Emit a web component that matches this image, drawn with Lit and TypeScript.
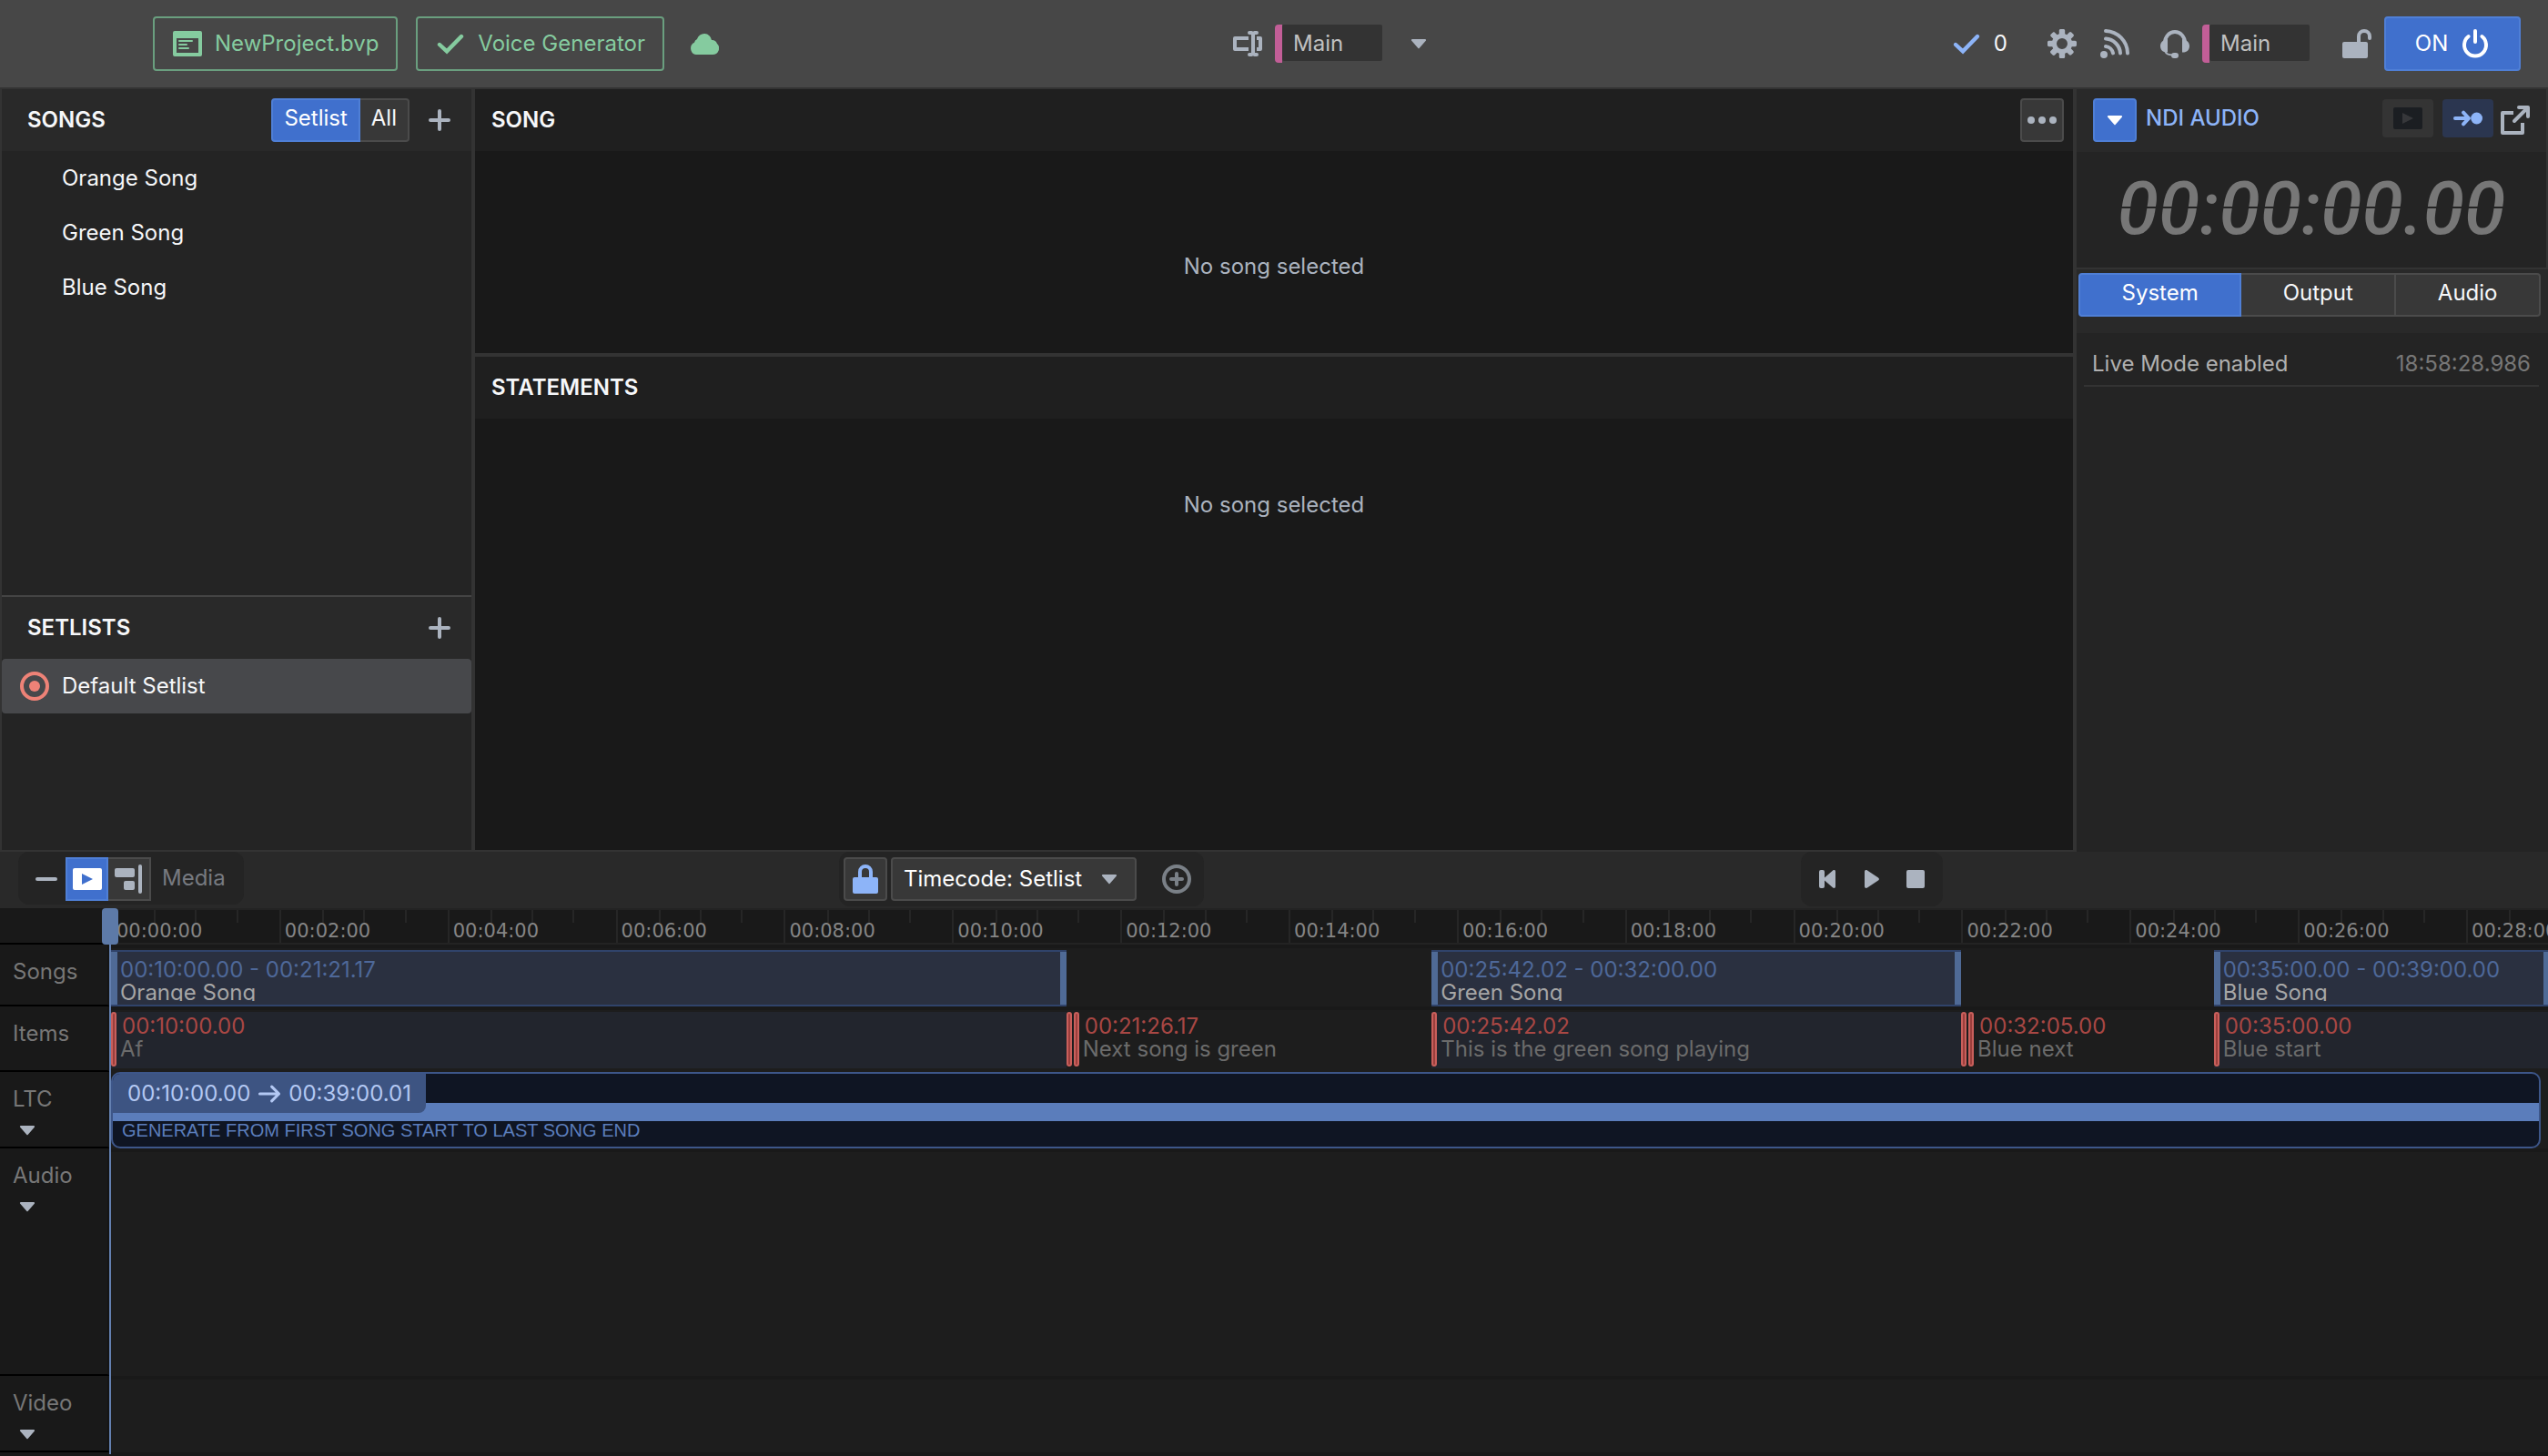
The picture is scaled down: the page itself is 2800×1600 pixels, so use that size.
import { LitElement, html, css, svg, nothing, TemplateResult } from "lit";
import { customElement, state } from "lit/decorators.js";
import { classMap } from "lit/directives/class-map.js";

const glyphs: Record<string, TemplateResult> = {
  app: svg`<path fill-rule="evenodd" d="M1 1h14a1 1 0 0 1 1 1v12a1 1 0 0 1-1 1H1a1 1 0 0 1-1-1V2a1 1 0 0 1 1-1zM2 5v8h12V5z"/><path d="M3.5 6h7a.5.5 0 0 1 0 1h-7a.5.5 0 0 1 0-1zM3.5 8h4a.5.5 0 0 1 0 1h-4a.5.5 0 0 1 0-1zM3.5 10h5a.5.5 0 0 1 0 1h-5a.5.5 0 0 1 0-1z"/>`,
  tick: svg`<path d="M2 8.500l4 3.700L14 4" fill="none" stroke="currentColor" stroke-width="2.200" stroke-linecap="round"/>`,
  cloud: svg`<path d="M12 6a4.100 4.100 0 0 0-8-.5A2.600 2.600 0 0 0 2.500 7.400 3.500 3.500 0 0 0 3.500 14h9a3.500 3.500 0 0 0 2.500-6A3 3 0 0 0 12 6z"/>`,
  textbox: svg`<path d="M8.500 5H1v6h7.500M13 5h2v6h-2" fill="none" stroke="currentColor" stroke-width="2" stroke-linejoin="round"/><path d="M9 2h1.200l.8.700.8-.700H13M9 14h1.200l.8-.700.8.700H13M11 3v10" fill="none" stroke="currentColor" stroke-width="2" stroke-linecap="round" stroke-linejoin="round"/>`,
  caret: svg`<path d="M4.500 5.500h7c.5 0 .700.500.4.900l-3.500 4a.5.5 0 0 1-.8 0l-3.500-4c-.3-.4-.1-.9.4-.9z"/>`,
  cog: svg`<path d="M15.190 6.390h-1.850c-.11-.37-.27-.71-.45-1.040l1.360-1.360c.31-.31.31-.82 0-1.130l-1.130-1.130a.803.803 0 0 0-1.130 0l-1.360 1.360c-.33-.17-.67-.33-1.040-.44V.79c0-.44-.36-.8-.8-.8h-1.600c-.44 0-.8.36-.8.8v1.860c-.39.12-.75.28-1.100.47l-1.300-1.300c-.3-.3-.79-.3-1.090 0L1.820 2.910c-.3.3-.3.79 0 1.090l1.300 1.300c-.2.34-.36.7-.48 1.090H.79c-.44 0-.8.36-.8.8v1.600c0 .44.36.8.8.8h1.850c.11.37.27.71.45 1.040l-1.360 1.360c-.31.31-.31.82 0 1.130l1.130 1.130c.31.31.82.31 1.130 0l1.360-1.360c.33.18.67.33 1.040.44v1.860c0 .44.36.8.8.8h1.600c.44 0 .8-.36.8-.8v-1.860c.39-.12.75-.28 1.100-.47l1.300 1.300c.3.3.79.3 1.090 0l1.090-1.090c.3-.3.3-.79 0-1.090l-1.300-1.300c.19-.35.36-.71.48-1.100h1.850c.44 0 .8-.36.8-.8v-1.600a.816.816 0 0 0-.81-.79zM8 11a3 3 0 1 1 0-6 3 3 0 0 1 0 6z"/>`,
  feed: svg`<circle cx="2" cy="14" r="2"/><path d="M3 9.500A4.500 4.500 0 0 1 7 13.200M3 5.300A8.500 8.500 0 0 1 11 13.200M3 1A12.500 12.500 0 0 1 15 13.200" fill="none" stroke="currentColor" stroke-width="2" stroke-linecap="round"/>`,
  headset: svg`<path d="M2.500 7.500A5.500 6 0 0 1 13.500 7.500" fill="none" stroke="currentColor" stroke-width="2"/><path d="M4 5.500v7.200H3C1.300 12.700 0 11.300 0 9.300 0 7.500 1.200 5.800 4 5.500zM12 5.500v7.200h1c1.700 0 3-1.400 3-3.400 0-1.800-1.200-3.500-4-3.800z"/><path d="M2.800 12.500c.5 1.400 1.700 1.700 4 1.700" fill="none" stroke="currentColor"/><rect x="6" y="13" width="4" height="3" rx="1.500"/>`,
  unlock: svg`<rect x="0" y="7" width="14" height="9" rx="1"/><path d="M9 8V4a3 3 0 0 1 6 0v1" fill="none" stroke="currentColor" stroke-width="2" stroke-linecap="round"/>`,
  lock: svg`<rect x="1" y="7" width="14" height="9" rx="1"/><path d="M5 8V4a3 3 0 0 1 6 0v4" fill="none" stroke="currentColor" stroke-width="2"/>`,
  power: svg`<path d="M4.300 4A6 6 0 1 0 11.700 4M8 1v6" fill="none" stroke="currentColor" stroke-width="2" stroke-linecap="round"/>`,
  plus: svg`<path d="M8 3v10M3 8h10" fill="none" stroke="currentColor" stroke-width="2" stroke-linecap="round"/>`,
  minus: svg`<path d="M3 8h10" fill="none" stroke="currentColor" stroke-width="2" stroke-linecap="round"/>`,
  more: svg`<circle cx="2" cy="8" r="2"/><circle cx="8" cy="8" r="2"/><circle cx="14" cy="8" r="2"/>`,
  video: svg`<path fill-rule="evenodd" d="M1 2h14a1 1 0 0 1 1 1v10a1 1 0 0 1-1 1H1a1 1 0 0 1-1-1V3a1 1 0 0 1 1-1zM5 5v6l6-3z"/>`,
  videoFaint: svg`<rect y="2" width="16" height="12" rx="1" fill="#1b1e22"/><path d="M5 5v6l6-3z" fill="#36373a"/>`,
  toPoint: svg`<circle cx="12.800" cy="8" r="3.200"/><path d="M1 8h6M5.500 4.800L8.500 8l-3 3.200" fill="none" stroke="currentColor" stroke-width="2" stroke-linecap="round" stroke-linejoin="round"/>`,
  share: svg`<path d="M7 4H1v11h11V9.500" fill="none" stroke="currentColor" stroke-width="2" stroke-linejoin="round"/><path d="M7.500 8.500L13.500 2.500M10 1h5v5" fill="none" stroke="currentColor" stroke-width="2" stroke-linecap="round" stroke-linejoin="round"/>`,
  record: svg`<circle cx="8" cy="8" r="7" fill="none" stroke="currentColor" stroke-width="2"/><circle cx="8" cy="8" r="3"/>`,
  alignRight: svg`<rect x="0" y="2" width="11" height="5" rx="1"/><rect x="5" y="9" width="6" height="5" rx="1"/><rect x="13" y="0" width="2" height="16" rx="1"/>`,
  addCircle: svg`<circle cx="8" cy="8" r="7" fill="none" stroke="currentColor" stroke-width="2"/><path d="M8 5v6M5 8h6" fill="none" stroke="currentColor" stroke-width="2" stroke-linecap="round"/>`,
  toStart: svg`<rect x="3" y="3" width="3" height="10" rx="1"/><path d="M12 4v8c0 .9-.7 1.200-1.400.7L6 8.800a1 1 0 0 1 0-1.600l4.600-3.900C11.300 2.800 12 3.100 12 4z"/>`,
  play: svg`<path d="M4 4c0-.9.8-1.200 1.500-.8l6 4c.6.4.6 1.200 0 1.600l-6 4c-.7.4-1.500.1-1.500-.8z"/>`,
  stop: svg`<rect x="3" y="3" width="10" height="10" rx="1"/>`,
  arrow: svg`<path d="M2 8h12M9.500 3.500L14 8l-4.500 4.500" fill="none" stroke="currentColor" stroke-width="1.800" stroke-linecap="round" stroke-linejoin="round"/>`,
};

const icon = (name: string) =>
  html`<svg class="icon" viewBox="0 0 16 16" fill="currentColor" aria-hidden="true">${glyphs[name]}</svg>`;

interface Span {
  from: number;
  to: number;
}
interface SongClip extends Span {
  name: string;
  range: string;
}
interface Cue extends Span {
  name: string;
  time: string;
  kind: "filled" | "plain" | "short";
}

/* Minutes of timecode that fit in the visible part of the timeline. */
const VISIBLE_MINUTES = 28.973;
const percent = (minutes: number) => `${((minutes / VISIBLE_MINUTES) * 100).toFixed(3)}%`;

/* Each block carries the gap to its predecessor as its left margin. */
const place = (blocks: Span[], i: number) => {
  const before = i === 0 ? 0 : blocks[i - 1].to;
  const { from, to } = blocks[i];
  return `margin-left:${percent(from - before)};width:${percent(to - from)}`;
};

const songs = ["Orange Song", "Green Song", "Blue Song"];

const songClips: SongClip[] = [
  { name: "Orange Song", range: "00:10:00.00 - 00:21:21.17", from: 0, to: 11.361 },
  { name: "Green Song", range: "00:25:42.02 - 00:32:00.00", from: 15.701, to: 22 },
  { name: "Blue Song", range: "00:35:00.00 - 00:39:00.00", from: 25, to: 29 },
];

/* Short cues have no room for a label; only their marker shows. */
const cues: Cue[] = [
  { name: "Af", time: "00:10:00.00", from: 0, to: 11.361, kind: "filled" },
  { name: "", time: "", from: 11.361, to: 11.444, kind: "short" },
  { name: "Next song is green", time: "00:21:26.17", from: 11.444, to: 15.701, kind: "plain" },
  { name: "This is the green song playing", time: "00:25:42.02", from: 15.701, to: 22, kind: "filled" },
  { name: "", time: "", from: 22, to: 22.083, kind: "short" },
  { name: "Blue next", time: "00:32:05.00", from: 22.083, to: 25, kind: "plain" },
  { name: "Blue start", time: "00:35:00.00", from: 25, to: 29, kind: "filled" },
];

const marks = Array.from({ length: 15 }, (_, i) => `00:${String(i * 2).padStart(2, "0")}:00`);

@customElement("app-root")
export class AppRoot extends LitElement {
  @state() private listMode = "Setlist";
  @state() private logTab = "System";

  static styles = css`
    :host {
      display: block;
      font-family: Inter, "Liberation Sans", sans-serif;
      font-size: 24px;
      line-height: 28px;
      color: #f6f7f9;
      background: #191919;
    }
    *, *::before { box-sizing: border-box; }
    button, input, select {
      font: inherit;
      color: inherit;
      margin: 0;
      padding: 0;
      border: 0;
      background: none;
    }
    button {
      display: inline-flex;
      align-items: center;
      justify-content: center;
      flex: none;
    }
    h2 { margin: 0; font-size: 24px; line-height: 28px; font-weight: 600; }
    ul { list-style: none; margin: 0; padding: 0; }
    .icon { width: 32px; height: 32px; flex: none; display: block; }
    .muted { color: #abb3bf; }
    .blue { color: #8db4f8; }

    .app { display: flex; flex-direction: column; min-height: 100vh; overflow: hidden; }

    /* top bar */
    .topbar {
      display: grid;
      grid-template-columns: 1fr auto 1fr;
      align-items: center;
      padding: 18px 30px 18px 168px;
      background: #474747;
      border-bottom: 2px solid #333;
    }
    .cluster { display: flex; align-items: center; }
    .outlined {
      height: 60px;
      padding: 0 19px 0 20px;
      gap: 14px;
      border: 2px solid #6a9f7f;
      border-radius: 4px;
      color: #85cb9f;
    }
    .left { gap: 20px; }
    .cloud { color: #85cb9f; padding-left: 8px; }
    .middle { gap: 14px; margin-right: 8px; }
    .channel {
      display: flex;
      width: 118px;
      height: 42px;
      border-left: 8px solid #c25e97;
      border-radius: 4px;
    }
    .channel input {
      width: 100%;
      height: 40px;
      padding: 0 12px;
      background: #333;
      border-radius: 2px;
      color: #c0c0c0;
    }
    .pick { margin-left: 10px; }
    .right { justify-content: flex-end; }
    .count { display: flex; gap: 14px; align-items: center; margin-right: 44px; }
    .tools { display: flex; align-items: center; gap: 26px; }
    .tools .voice { display: flex; gap: 14px; align-items: center; margin-left: 8px; }
    .tools .latch { margin-left: 10px; }
    .primary {
      background: #4070cd;
      border: 2px solid #4f7fd6;
      border-radius: 4px;
      color: #fff;
    }
    .power { width: 150px; height: 60px; gap: 14px; margin-left: 14px; }

    /* work area */
    .work {
      flex: 1;
      display: grid;
      grid-template-columns: 522px minmax(0, 1fr) 522px;
      min-height: 836px;
    }
    .side {
      display: grid;
      grid-template-rows: 556fr 280fr;
      background: #242424;
      border: solid #333;
      border-width: 0 4px 2px 2px;
    }
    .side section + section { border-top: 2px solid #444; }
    .bar {
      display: flex;
      align-items: center;
      height: 68px;
      padding: 0 15px 0 28px;
      background: #292929;
    }
    .bar .icon-button { width: 40px; height: 48px; margin-left: 13px; }
    .bar .push { margin-left: auto; }
    .seg { display: flex; }
    .seg button {
      height: 48px;
      padding: 0 12px 4px;
      background: #383838;
      border: 2px solid #4b4b4b;
      border-left-width: 0;
    }
    .seg button:first-child { border-left-width: 2px; border-radius: 4px 0 0 4px; }
    .seg button:last-child { border-radius: 0 4px 4px 0; }
    .seg button.on { background: #4070cd; border-color: #4f7fd6; color: #fff; }
    .row { display: flex; align-items: center; height: 60px; padding-left: 66px; }
    .row.current { padding-left: 20px; gap: 14px; background: #47484b; border-radius: 4px; }
    .row.current .icon { color: #ee8277; }

    .stage { display: grid; grid-template-rows: 294fr 542fr; border-bottom: 2px solid #333; }
    .stage .bar { padding: 0 10px 0 18px; background: #1f1f1f; }
    .stage section:first-child { border-bottom: 4px solid #333; }
    .empty { margin: 0; text-align: center; color: #abb3bf; }
    .song .empty { padding-top: 113px; }
    .statements .empty { padding-top: 81px; }
    .square {
      width: 48px;
      height: 48px;
      background: #383838;
      border: 2px solid #4b4b4b;
      border-radius: 4px;
    }
    .square.primary { background: #4070cd; border-color: #4f7fd6; }

    .monitor { background: #242424; border-left: 4px solid #333; }
    .clockbox { border: solid #333; border-width: 0 2px 2px 0; }
    .monitor .bar { padding: 0 18px 2px; gap: 10px; height: 69px; }
    .chip { width: 56px; height: 42px; margin-bottom: 4px; border-radius: 4px; background: #343434; }
    .chip.route { background: #2b3650; margin-right: -2px; }
    .monitor h2 { padding-bottom: 4px; font-weight: 500; }
    .clock {
      display: block;
      height: 127px;
      padding-top: 14px;
      text-align: center;
      font: italic 500 82px/96px Roboto, "Liberation Sans", sans-serif;
      color: transparent;
      background: linear-gradient(#777 60px, transparent 60px, transparent 62px, #777 62px);
      -webkit-background-clip: text;
      background-clip: text;
    }
    .tabs { display: flex; height: 70px; padding: 4px 8px 0 2px; background: #292929; }
    .tabs button { flex: 1 1 auto; padding: 0 44px 4px; }
    .log { padding: 0 10px 0 8px; }
    .log li {
      display: flex;
      justify-content: space-between;
      padding: 20px 9px 9px;
      border-bottom: 2px solid #333;
      color: #b0b0b0;
    }
    .log time { color: #777; }

    /* timeline */
    .deck { background: #191919; }
    .transport {
      display: grid;
      grid-template-columns: minmax(0, 902fr) auto minmax(0, 1457fr);
      height: 62px;
      padding: 0 20px;
      background: #292929;
      align-items: start;
    }
    .pod { display: flex; align-items: center; background: #242424; border-radius: 12px; }
    .pod.media { justify-self: start; height: 58px; padding: 2px 20px 0 10px; color: #777a80; }
    .pod.media > button { width: 42px; }
    .pod.media .seg button { width: 47px; padding: 0; border-radius: 0; color: #abb3bf; }
    .pod.media .seg button.on { color: #fff; }
    .pod.media span { margin-left: 12px; padding-bottom: 2px; }
    .pod.code { height: 60px; padding: 0 14px 0 5px; gap: 4px; }
    .picker { position: relative; display: flex; }
    .picker select {
      appearance: none;
      width: 270px;
      height: 48px;
      padding: 0 14px 0 12px;
      background: #383838;
      border: 2px solid #4b4b4b;
      border-radius: 4px;
      color: #fff;
    }
    .picker .icon { position: absolute; right: 14px; top: 8px; pointer-events: none; }
    .pod.code .add { color: #7a8087; margin-left: 24px; }
    .pod.play { justify-self: start; height: 60px; padding: 0 14px; gap: 16px; margin-left: 45%; }

    .tracks { position: relative; padding-bottom: 4px; }
    .track {
      display: grid;
      grid-template-columns: 122px minmax(0, 1fr);
    }
    .name {
      padding: 16px 0 0 14px;
      border-bottom: 2px solid #000;
      border-right: 4px solid #141414;
      color: #777;
    }
    .name button { display: flex; padding-top: 4px; color: #abb3bf; }
    .lane { display: flex; overflow: hidden; background: #1d1d1d; border-top: 4px solid #191919; }
    .ruler .name, .ruler .scale { height: 40px; padding: 0; }
    .scale {
      display: flex;
      overflow: hidden;
      border: solid #232323;
      border-width: 2px 0;
      font: 21px/28px "DejaVu Sans", sans-serif;
      color: #858585;
    }
    .mark {
      flex: none;
      padding: 9px 0 0 4px;
      border-left: 2px solid #262626;
      background:
        linear-gradient(#262626, #262626) 25% 0 / 2px 14px no-repeat,
        linear-gradient(#262626, #262626) 50% 0 / 2px 14px no-repeat,
        linear-gradient(#262626, #262626) 75% 0 / 2px 14px no-repeat;
    }
    .h-songs { height: 68px; }
    .h-items { height: 72px; }
    .h-ltc { height: 84px; }
    .h-audio { height: 250px; }
    .h-video { height: 84px; }
    .clip {
      flex: none;
      margin-top: 2px;
      height: 62px;
      padding: 7px 5px 4px 4px;
      overflow: hidden;
      line-height: 25px;
      white-space: nowrap;
      background: #2a3040;
      border: solid #30436a;
      border-width: 2px 0;
      box-shadow: inset 7px 0 #4f6a96, inset -7px 0 #4f6a96;
      color: #4e6899;
    }
    .clip > div { height: 47px; padding-left: 6px; overflow: hidden; }
    .clip strong { display: block; font-weight: 400; color: #a6a6a6; }
    .cue {
      flex: none;
      margin-top: 2px;
      height: 62px;
      padding: 3px 0 0 10px;
      line-height: 25px;
      white-space: nowrap;
      color: #6b6b6b;
      position: relative;
    }
    .cue::before {
      content: "";
      position: absolute;
      left: 0;
      top: 0;
      width: 6px;
      height: 60px;
      border: 2px solid #c95f5b;
      border-radius: 3px;
      background: #9b3f3d;
    }
    .cue.filled { background: #22252d; }
    .cue.short { padding: 0; }
    .cue b { display: block; padding-left: 2px; font-weight: 400; color: #a84744; }
    .ltc { border-top: 0; padding-right: 8px; }
    .signal {
      flex: 1;
      overflow: hidden;
      border: 2px solid #3d5689;
      border-radius: 10px;
      background: linear-gradient(#5b7dbb, #5b7dbb) 0 32px / 100% 20px no-repeat #0f1523;
    }
    .badge {
      display: inline-flex;
      align-items: center;
      height: 43px;
      padding: 0 16px;
      background: #3d5482;
      border-radius: 0 0 8px 0;
      color: #b3c8f3;
    }
    .badge .icon { width: 28px; height: 28px; margin: 0 7px; }
    .hint {
      margin: 0;
      padding: 7px 0 0 10px;
      font: 20px/24px "Liberation Sans", sans-serif;
      color: #5b7dbb;
    }
    .playhead {
      position: absolute;
      left: 112px;
      top: 0;
      bottom: 2px;
      width: 18px;
      background: linear-gradient(#6480b0, #6480b0) 8px 0 / 2px 100% no-repeat;
      pointer-events: none;
    }
    .playhead::before {
      content: "";
      display: block;
      height: 40px;
      border-radius: 4px;
      background: #5d7aa8;
    }
  `;

  private segmented(options: string[], current: string, pick: (v: string) => void, extra = "") {
    return html`<div class="seg ${extra}">
      ${options.map(
        (o) => html`<button
          class=${classMap({ on: o === current })}
          aria-pressed=${o === current}
          @click=${() => pick(o)}
        >${o}</button>`
      )}
    </div>`;
  }

  private channel(label: string) {
    return html`<label class="channel"><input aria-label=${label} .value=${"Main"} /></label>`;
  }

  private topbar() {
    return html`<header class="topbar">
      <div class="cluster left">
        <button class="outlined">${icon("app")}NewProject.bvp</button>
        <button class="outlined">${icon("tick")}Voice Generator</button>
        <span class="cloud">${icon("cloud")}</span>
      </div>
      <div class="cluster middle muted">
        ${icon("textbox")} ${this.channel("Text channel")}
        <button class="pick" aria-label="Choose text channel">${icon("caret")}</button>
      </div>
      <div class="cluster right">
        <div class="count"><span class="blue">${icon("tick")}</span>0</div>
        <div class="tools muted">
          <button aria-label="Settings">${icon("cog")}</button>
          <button aria-label="Feed">${icon("feed")}</button>
          <div class="voice">${icon("headset")} ${this.channel("Voice channel")}</div>
          <button class="latch" aria-label="Unlock">${icon("unlock")}</button>
        </div>
        <button class="primary power">ON ${icon("power")}</button>
      </div>
    </header>`;
  }

  private side() {
    return html`<aside class="side">
      <section>
        <div class="bar">
          <h2>SONGS</h2>
          ${this.segmented(["Setlist", "All"], this.listMode, (v) => (this.listMode = v), "push")}
          <button class="icon-button muted" aria-label="Add song">${icon("plus")}</button>
        </div>
        <ul>${songs.map((s) => html`<li class="row">${s}</li>`)}</ul>
      </section>
      <section>
        <div class="bar">
          <h2>SETLISTS</h2>
          <button class="icon-button push muted" aria-label="Add setlist">${icon("plus")}</button>
        </div>
        <ul><li class="row current">${icon("record")}Default Setlist</li></ul>
      </section>
    </aside>`;
  }

  private stage() {
    return html`<main class="stage">
      <section class="song">
        <div class="bar">
          <h2>SONG</h2>
          <button class="square push muted" aria-label="Song options">${icon("more")}</button>
        </div>
        <p class="empty">No song selected</p>
      </section>
      <section class="statements">
        <div class="bar"><h2>STATEMENTS</h2></div>
        <p class="empty">No song selected</p>
      </section>
    </main>`;
  }

  private monitor() {
    return html`<aside class="monitor">
      <div class="clockbox">
        <div class="bar">
          <button class="square primary" aria-label="Choose output">${icon("caret")}</button>
          <h2 class="blue">NDI AUDIO</h2>
          <button class="chip push" aria-label="Preview">${icon("videoFaint")}</button>
          <button class="chip route blue" aria-label="Route">${icon("toPoint")}</button>
          <button class="muted" aria-label="Open in window">${icon("share")}</button>
        </div>
        <time class="clock">00:00:00.00</time>
      </div>
      ${this.segmented(["System", "Output", "Audio"], this.logTab, (v) => (this.logTab = v), "tabs")}
      <ul class="log">
        <li><span>Live Mode enabled</span><time>18:58:28.986</time></li>
      </ul>
    </aside>`;
  }

  private transport() {
    return html`<div class="transport">
      <div class="pod media">
        <button class="muted" aria-label="Collapse">${icon("minus")}</button>
        <div class="seg">
          <button class="on" aria-label="Media view">${icon("video")}</button>
          <button aria-label="Align right">${icon("alignRight")}</button>
        </div>
        <span>Media</span>
      </div>
      <div class="pod code">
        <button class="square blue" aria-label="Lock timeline">${icon("lock")}</button>
        <div class="picker muted">
          <select aria-label="Timecode source"><option>Timecode: Setlist</option></select>
          ${icon("caret")}
        </div>
        <button class="add" aria-label="Add track">${icon("addCircle")}</button>
      </div>
      <div class="pod play muted">
        <button aria-label="To start">${icon("toStart")}</button>
        <button aria-label="Play">${icon("play")}</button>
        <button aria-label="Stop">${icon("stop")}</button>
      </div>
    </div>`;
  }

  private track(name: string, size: string, lane: unknown, folds = false, extra = "") {
    return html`<div class="track ${size}">
      <div class="name">
        ${name}${folds ? html`<button aria-label="Fold ${name}">${icon("caret")}</button>` : nothing}
      </div>
      <div class="lane ${extra}">${lane}</div>
    </div>`;
  }

  private tracks() {
    return html`<div class="tracks">
      <div class="track ruler">
        <div class="name"></div>
        <div class="scale">
          ${marks.map((m) => html`<div class="mark" style="width:${percent(2)}">${m}</div>`)}
        </div>
      </div>
      ${this.track(
        "Songs",
        "h-songs",
        songClips.map(
          (c, i) => html`<div class="clip" style=${place(songClips, i)}>
            <div>${c.range}<strong>${c.name}</strong></div>
          </div>`
        )
      )}
      ${this.track(
        "Items",
        "h-items",
        cues.map(
          (c, i) => html`<div class="cue ${c.kind}" style=${place(cues, i)}>
            ${c.time ? html`<b>${c.time}</b>${c.name}` : nothing}
          </div>`
        )
      )}
      ${this.track(
        "LTC",
        "h-ltc",
        html`<div class="signal">
          <div class="badge">00:10:00.00${icon("arrow")}00:39:00.01</div>
          <p class="hint">GENERATE FROM FIRST SONG START TO LAST SONG END</p>
        </div>`,
        true,
        "ltc"
      )}
      ${this.track("Audio", "h-audio", nothing, true)} ${this.track("Video", "h-video", nothing, true)}
      <div class="playhead"></div>
    </div>`;
  }

  render() {
    return html`<div class="app">
      ${this.topbar()}
      <div class="work">${this.side()} ${this.stage()} ${this.monitor()}</div>
      <div class="deck">${this.transport()} ${this.tracks()}</div>
    </div>`;
  }
}
